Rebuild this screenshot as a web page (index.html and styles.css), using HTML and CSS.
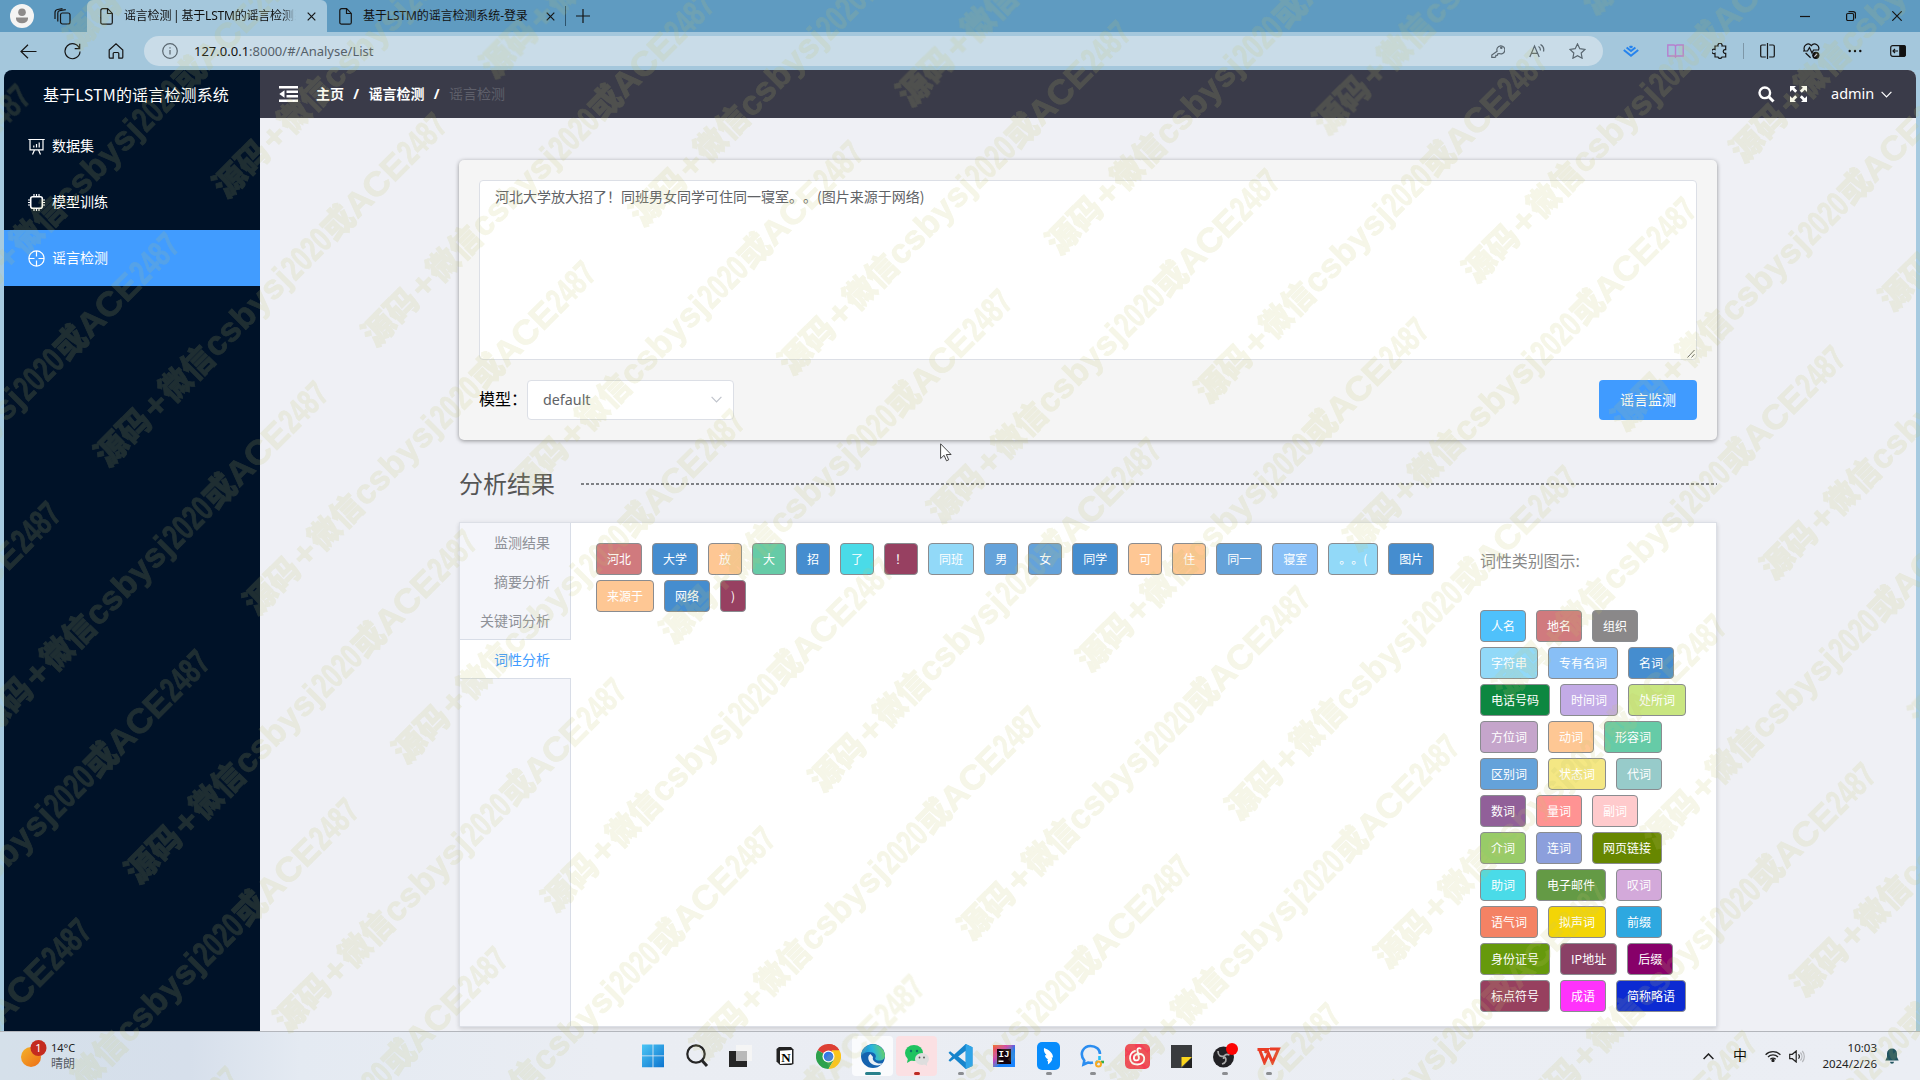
FILE: index.html
```html
<!DOCTYPE html>
<html lang="zh-CN">
<head>
<meta charset="utf-8">
<title>谣言检测 | 基于LSTM的谣言检测系统</title>
<link rel="stylesheet" href="styles.css">
</head>
<body>
<div class="screen">
  <div class="tabbar">
    <span class="avatar"><svg width="24" height="24" viewBox="0 0 24 24"><circle cx="12" cy="12" r="12" fill="#f4f4f3"/><circle cx="12" cy="8.3" r="3.8" fill="#8d8b8a"/><path d="M6 13.5h12v1.2a6 4.6 0 0 1-12 0z" fill="#8d8b8a"/></svg></span>
    <span class="spaces"><svg width="17" height="17" viewBox="0 0 17 17" class="ln"><rect x="6.5" y="5" width="9.5" height="11" rx="2"/><path d="M3.8 13.5V5a2.3 2.3 0 0 1 2-2.3l6-1M1 11V4.500a3 3 0 0 1 2.500-3L8.500.6"/></svg></span>
    <div class="tab active">
      <svg width="13" height="17" viewBox="0 0 13 17" class="ln"><path d="M.8 2.500A1.800 1.800 0 0 1 2.600.7h5l4.700 4.700v9a1.800 1.800 0 0 1-1.800 1.800H2.600a1.800 1.800 0 0 1-1.800-1.800zM7.500.8v4.700h4.700"/></svg>
      <span class="tab-text fade">谣言检测 | 基于LSTM的谣言检测系统</span>
      <svg width="9" height="9" viewBox="0 0 9 9" class="ln"><path d="M.7.7l7.600 7.600M8.300.7L.7 8.300"/></svg>
    </div>
    <div class="tab">
      <svg width="13" height="17" viewBox="0 0 13 17" class="ln"><path d="M.8 2.500A1.800 1.800 0 0 1 2.600.7h5l4.700 4.700v9a1.800 1.800 0 0 1-1.800 1.800H2.600a1.800 1.800 0 0 1-1.800-1.800zM7.500.8v4.700h4.700"/></svg>
      <span class="tab-text">基于LSTM的谣言检测系统-登录</span>
      <svg width="9" height="9" viewBox="0 0 9 9" class="ln"><path d="M.7.7l7.600 7.600M8.300.7L.7 8.300"/></svg>
    </div>
    <span class="tab-sep"></span>
    <svg class="newtab ln" width="14" height="14" viewBox="0 0 14 14"><path d="M7 0v14M0 7h14"/></svg>
    <div class="winbtns">
      <svg width="10" height="10" viewBox="0 0 10 10" class="ln"><path d="M0 5.500h10"/></svg>
      <svg width="10" height="10" viewBox="0 0 10 10" class="ln"><rect x=".6" y="2.500" width="7" height="7" rx="1.200"/><path d="M2.500.6h4.700a2.300 2.300 0 0 1 2.300 2.300v4.700"/></svg>
      <svg width="10" height="10" viewBox="0 0 10 10" class="ln"><path d="M.3.3l9.400 9.400M9.700.3L.3 9.700"/></svg>
    </div>
  </div>

  <div class="toolbar">
    <svg width="17" height="15" viewBox="0 0 17 15" class="ln"><path d="M16.500 7.500H1M8 .8L1 7.500l7 6.700"/></svg>
    <svg width="17" height="17" viewBox="0 0 17 17" class="ln"><path d="M15.500 5.500A7.500 7.500 0 1 0 16 8.500M15.700.8v4.900h-5"/></svg>
    <svg width="16" height="16" viewBox="0 0 16 16" class="ln"><path d="M1.200 7L8 .9 14.800 7v7.200a1 1 0 0 1-1 1h-3V10.500a1 1 0 0 0-1-1H6.200a1 1 0 0 0-1 1v4.700h-3a1 1 0 0 1-1-1z"/></svg>
    <div class="address">
      <svg width="16" height="16" viewBox="0 0 16 16" class="ln gray"><circle cx="8" cy="8" r="7.300"/><path d="M8 7v4.500M8 4.300v1.300"/></svg>
      <span class="url"><b>127.0.0.1</b>:8000/#/Analyse/List</span>
      <div class="addr-icons">
        <svg width="14" height="14" viewBox="0 0 14 14" class="ln gray"><path d="M6.100 7.300a4 4 0 1 1 2 2.200l-1.300.2-.3 1.500-1.600.2-.3 1.600-1 .4H.8V11z"/><circle cx="10.300" cy="3.800" r=".7"/></svg>
        <svg width="16" height="14" viewBox="0 0 16 14" class="ln gray"><path d="M.8 13L5.500 2l4.700 11M2.500 9.300h6M9.500 2.500c1.600 1 2 2.800 1.700 4M11.500.5c3 1.700 3.600 4.700 3 7"/></svg>
        <svg width="17" height="16" viewBox="0 0 17 16" class="ln gray"><path d="M8.500.9l2.300 4.800 5.200.7-3.800 3.600.9 5.200-4.600-2.500-4.600 2.500.9-5.200L1 6.400l5.200-.7z"/></svg>
      </div>
    </div>
    <div class="ext">
      <svg width="16" height="12" viewBox="0 0 16 12" fill="none" stroke="#2583ee" stroke-width="2"><path d="M.8 5L8 10.700 15.200 5M3.600 2.500L8 6l4.400-3.500"/><path d="M6.500 1.200L8 2.300l1.500-1.100"/></svg>
      <svg width="17" height="14" viewBox="0 0 17 14" fill="none" stroke="#b67fce" stroke-width="1.400"><path d="M8.500 2v10M.8 1h6a1.700 1.700 0 0 1 1.700 1.300A1.700 1.700 0 0 1 10.200 1h6v11h-6a1.700 1.700 0 0 0-1.700 1 1.700 1.700 0 0 0-1.700-1h-6z"/></svg>
      <svg width="15" height="16" viewBox="0 0 15 16" class="ln"><path d="M3 3h3a2.100 2.100 0 1 1 4 0h3.700v3.700h-1a1.900 1.900 0 0 0 0 3.700h1V14H10a2.100 2.100 0 0 1-4 0H3v-3.700a2.200 2.200 0 1 1 0-3.800z"/></svg>
      <span class="ext-sep"></span>
      <svg width="15" height="16" viewBox="0 0 15 16" class="ln"><path d="M5.800 2H2A1.300 1.300 0 0 0 .7 3.300v9.400A1.300 1.300 0 0 0 2 14h3.800M9.200 2H13a1.300 1.300 0 0 1 1.300 1.300v9.400A1.300 1.300 0 0 1 13 14H9.200M7.500 0v16"/></svg>
      <svg width="17" height="16" viewBox="0 0 17 16" class="ln"><path d="M1.500 7.500C-.4 2.500 5.200-1.300 8.300 2.700c3.200-4 9.300 0 7 4.800M0 8h4.500L6.500 4.500 9 10l1.500-3h5M2.600 10l5 4.800"/><circle cx="12.800" cy="12.300" r="3.600" fill="#111" stroke="none"/><path d="M11.400 13.700l2.600-2.800" stroke="#ccd"/></svg>
      <svg width="14" height="4" viewBox="0 0 14 4" fill="#111"><circle cx="1.700" cy="2" r="1.200"/><circle cx="7" cy="2" r="1.200"/><circle cx="12.300" cy="2" r="1.200"/></svg>
      <svg width="16" height="12" viewBox="0 0 16 12" class="ln"><rect x=".7" y=".7" width="14.600" height="10.600" rx="2"/><path d="M9.800.7H14a1.300 1.300 0 0 1 1.300 1.300v8a1.300 1.300 0 0 1-1.300 1.300H9.800z" fill="#111"/><path d="M8 6H3M5 4L3 6l2 2"/></svg>
    </div>
  </div>

  <div class="page">
    <aside class="sidebar">
      <div class="logo">基于LSTM的谣言检测系统</div>
      <div class="menu-item"><svg width="17" height="17" viewBox="0 0 17 17" class="ln mi"><path d="M.3 1.500h16.400M2 1.500v10.300h13V1.500M5.800 9.500v-2M8.500 9.500V6M11.200 9.500V4.500M6.500 12l-2 4.500M10.500 12l2 4.500"/></svg>数据集</div>
      <div class="menu-item"><svg width="17" height="17" viewBox="0 0 17 17" class="ln mi"><rect x="2.700" y="2.700" width="11.600" height="11.600" rx="2" stroke-width="1.600"/><path d="M6 0v3M8.500 0v3M11 0v3M6 14v3M8.500 14v3M11 14v3M0 6h3M0 8.500h3M0 11h3M14 6h3M14 8.500h3M14 11h3"/></svg>模型训练</div>
      <div class="menu-item on"><svg width="17" height="17" viewBox="0 0 17 17" class="ln mi"><circle cx="8.500" cy="8.500" r="7.600"/><path d="M8.500 1v5.500M8.500 10.500V16M1 8.500h5.500M10.500 8.500H16"/></svg>谣言检测</div>
    </aside>
    <section class="main">
      <header class="header">
        <svg class="fold" width="19" height="16" viewBox="0 0 19 16" fill="#fff"><path d="M0 0h19v2.400H0zM7.500 4.500H19v2.400H7.500zM7.500 9H19v2.400H7.500zM0 13.500h19V16H0zM5.500 4.200v7.500L.3 8z"/></svg>
        <div class="crumbs"><b>主页</b><i>/</i><b>谣言检测</b><i>/</i><span>谣言检测</span></div>
        <div class="tools">
          <svg width="17" height="17" viewBox="0 0 17 17" fill="none" stroke="#fff"><circle cx="6.800" cy="6.800" r="5.300" stroke-width="2.400"/><path d="M10.800 10.800l4.700 4.700" stroke-width="3"/></svg>
          <svg width="17" height="16" viewBox="0 0 17 16" fill="#fff"><path d="M0 0h6L4.200 1.800l3 3-2 2-3-3L0 6zM17 0v6l-2.200-2.200-3 3-2-2 3-3L11 0zM0 16v-6l2.200 2.200 3-3 2 2-3 3L6 16zM17 16h-6l1.800-1.800-3-3 2-2 3 3L17 10z"/></svg>
          <span class="user">admin</span>
          <svg width="11" height="7" viewBox="0 0 11 7" fill="none" stroke="#fff" stroke-width="1.200"><path d="M.6.8l4.900 5 4.900-5"/></svg>
        </div>
      </header>
      <div class="content">
        <div class="card">
          <div class="textarea">河北大学放大招了！同班男女同学可住同一寝室。。(图片来源于网络)
            <svg class="grip" width="8" height="9" viewBox="0 0 8 9" stroke="#666" stroke-width="1"><path d="M.5 8.500l7-7.500M4.500 8.500l3-3.300"/></svg>
          </div>
          <div class="form-row">
            <label>模型：</label>
            <div class="select">default<svg width="11" height="7" viewBox="0 0 11 7" fill="none" stroke="#c0c4cc" stroke-width="1.200"><path d="M.6.8l4.900 5 4.900-5"/></svg></div>
            <div class="btn">谣言监测</div>
          </div>
        </div>
        <div class="heading"><h2>分析结果</h2><div class="rule"></div></div>
        <div class="panel">
          <nav class="side-tabs"><a>监测结果</a><a>摘要分析</a><a>关键词分析</a><a class="cur">词性分析</a></nav>
          <div class="words">
            <span class="tag place">河北</span><span class="tag noun">大学</span><span class="tag verb">放</span><span class="tag adj">大</span><span class="tag noun">招</span><span class="tag aux">了</span><span class="tag punct">！</span><span class="tag str">同班</span><span class="tag diff">男</span><span class="tag diff">女</span><span class="tag noun">同学</span><span class="tag verb">可</span><span class="tag verb">住</span><span class="tag diff">同一</span><span class="tag proper">寝室</span><span class="tag str">。。(</span><span class="tag noun">图片</span><span class="tag verb">来源于</span><span class="tag noun">网络</span><span class="tag punct">)</span>
          </div>
          <div class="legend">
            <div class="legend-title">词性类别图示:</div>
            <div class="legend-tags">
              <span class="tag person">人名</span><span class="tag place">地名</span><span class="tag org">组织</span>
              <span class="tag str">字符串</span><span class="tag proper">专有名词</span><span class="tag noun">名词</span>
              <span class="tag phone">电话号码</span><span class="tag time">时间词</span><span class="tag loc">处所词</span>
              <span class="tag dir">方位词</span><span class="tag verb">动词</span><span class="tag adj">形容词</span>
              <span class="tag diff">区别词</span><span class="tag state">状态词</span><span class="tag pron">代词</span>
              <span class="tag num">数词</span><span class="tag quant">量词</span><span class="tag adv">副词</span>
              <span class="tag prep">介词</span><span class="tag conj">连词</span><span class="tag link">网页链接</span>
              <span class="tag aux">助词</span><span class="tag mail">电子邮件</span><span class="tag excl">叹词</span>
              <span class="tag mood">语气词</span><span class="tag onom">拟声词</span><span class="tag prefix">前缀</span>
              <span class="tag idno">身份证号</span><span class="tag ip">IP地址</span><span class="tag suffix">后缀</span>
              <span class="tag punct2">标点符号</span><span class="tag idiom">成语</span><span class="tag abbr">简称略语</span>
            </div>
          </div>
        </div>
      </div>
    </section>
  </div>

  <footer class="taskbar">
    <div class="weather">
      <svg width="26" height="28" viewBox="0 0 26 28"><defs><linearGradient id="sun" x1="0" y1="0" x2="1" y2="1"><stop offset="0" stop-color="#f3b32c"/><stop offset="1" stop-color="#ee6d15"/></linearGradient></defs><circle cx="10" cy="17" r="10" fill="url(#sun)"/><circle cx="17.500" cy="8" r="8" fill="#c42b1f"/><text x="17.500" y="12" font-size="11" fill="#fff" text-anchor="middle">1</text></svg>
      <div class="temp"><span>14°C</span><span class="sky">晴朗</span></div>
    </div>
    <div class="apps">
      <div class="app"><svg width="24" height="24" viewBox="0 0 24 24"><defs><linearGradient id="win" x1="0" y1="0" x2="1" y2="1"><stop offset="0" stop-color="#4cc6f5"/><stop offset="1" stop-color="#0d74cf"/></linearGradient></defs><path d="M1 .5h10.600v11H1zM12.400.5H23v11H12.400zM1 12.300h10.600v11H1zM12.400 12.300H23v11H12.400z" fill="url(#win)"/></svg></div>
      <div class="app"><svg width="24" height="24" viewBox="0 0 24 24" fill="none" stroke="#252525"><circle cx="11" cy="10" r="8.700" stroke-width="2.200"/><path d="M17 16.500l5 5.500" stroke-width="3"/></svg></div>
      <div class="app"><svg width="24" height="24" viewBox="0 0 24 24"><path d="M0 7h18v16H0z" fill="#252525"/><path d="M7 1h16v16H7z" fill="#f5f5f5"/><path d="M7 7h11v10H7z" fill="#b9b9b9"/></svg></div>
      <div class="app"><svg width="20" height="20" viewBox="0 0 20 20"><path d="M1.500 3L4 1h12l2.500 2.500V18L16 19H5L1.500 15.500z" fill="#222"/><path d="M5 4.800L17 4v13.200L5 18z" fill="#fff"/><text x="11" y="15.500" font-family="Liberation Serif, serif" font-size="13" font-weight="bold" text-anchor="middle">N</text></svg></div>
      <div class="app"><svg width="25" height="25" viewBox="0 0 24 24"><path d="M12 12L1.600 6A12 12 0 0 1 22.400 6z" fill="#dd4035"/><path d="M12 12V0A12 12 0 0 1 22.400 6L12 6z" fill="#dd4035"/><path d="M1.600 6A12 12 0 0 0 12 24l5.200-9L12 12z" fill="#2da14c"/><path d="M22.400 6A12 12 0 0 1 12 24l5.200-9L15 6z" fill="#fbc51c"/><circle cx="12" cy="12" r="5.800" fill="#fff"/><circle cx="12" cy="12" r="4.600" fill="#3278e8"/></svg></div>
      <div class="app focus"><svg width="24" height="24" viewBox="0 0 24 24"><defs><linearGradient id="edge" x1="0" y1=".5" x2="1" y2=".3"><stop offset="0" stop-color="#1a85d5"/><stop offset=".5" stop-color="#29b6dc"/><stop offset="1" stop-color="#6bd35d"/></linearGradient></defs><circle cx="12" cy="12" r="12" fill="#1462af"/><path d="M.1 11A12 12 0 0 1 24 11.500c0 4-3.700 5.500-7 5-3-.4-3.200-2-2.300-3.200C15.700 11 13 8 8.500 8 4 8 1 10 .1 12z" fill="url(#edge)"/><path d="M9.500 10c-4 2-2.500 9 3.500 11 4 1.200 7.500 0 9.500-2-6 2-12-2-10.500-6z" fill="#e8eff6"/></svg></div>
      <div class="app alert"><svg width="24" height="24" viewBox="0 0 24 24"><ellipse cx="9" cy="9" rx="9" ry="8" fill="#20c360"/><path d="M3 14l-1 5 5-3z" fill="#20c360"/><circle cx="6" cy="7" r="1.200" fill="#176"/><circle cx="12" cy="7" r="1.200" fill="#176"/><ellipse cx="17" cy="15" rx="7" ry="6" fill="#dedede"/><path d="M19 20l3 2v-4z" fill="#dedede"/><circle cx="14.500" cy="13.500" r=".9" fill="#555"/><circle cx="19" cy="13.500" r=".9" fill="#555"/></svg></div>
      <div class="app run"><svg width="25" height="25" viewBox="0 0 24 24"><path d="M17 0l6.500 3v18L17 24 6 14 2 17l-1.500-1.500L4 12 .5 8.500 2 7l4 3z" fill="#1684cc"/><path d="M17 6.500V17.500L9.800 12z" fill="#ebeef4"/><path d="M17 0l6.500 3v18L17 24z" fill="#30a5e8"/></svg></div>
      <div class="app"><svg width="23" height="24" viewBox="0 0 23 24"><defs><linearGradient id="ij" x1="0" y1="0" x2="1" y2="1"><stop offset="0" stop-color="#f6662a"/><stop offset=".35" stop-color="#cf3fb5"/><stop offset=".6" stop-color="#147cf5"/><stop offset="1" stop-color="#1d87ff"/></linearGradient></defs><path d="M0 1h22v22H0z" fill="url(#ij)"/><path d="M4 5h14v15H4z" fill="#15020e"/><text x="5.500" y="12.500" font-family="Liberation Mono, monospace" font-size="9" font-weight="bold" fill="#fff">IJ</text><path d="M5.500 16.500h5V18h-5z" fill="#fff"/></svg></div>
      <div class="app run"><svg width="23" height="28" viewBox="0 0 23 28"><rect width="23" height="28" rx="5" fill="#078cfc"/><path d="M7 6c5 1.500 9 5 9 9.500h-1.500l.8 1.500c-1 3-2.300 4-4.500 5.500.6-3 .1-3.500-1-4.500l1.500-.5C8.300 16 7.800 14 8.300 13l1.300.3C7.500 11 6.500 9 7 6z" fill="#fff"/></svg></div>
      <div class="app run"><svg width="25" height="24" viewBox="0 0 25 24" fill="none" stroke-width="2.600"><path d="M13 18.500c-2 .6-3.500.4-5 0L3.500 20.500l.8-4C-1.500 9 4 2 10.500 2 16 2 20 5.500 20 10" stroke="#2b8df0"/><path d="M19.500 12v4M18 19l-2-2" stroke="#25bdf2"/><path d="M21 18h3" stroke="#34b04a"/><circle cx="18.500" cy="20" r="2.500" stroke="#f8a920" stroke-width="2"/></svg></div>
      <div class="app"><svg width="25" height="25" viewBox="0 0 25 25"><rect width="25" height="25" rx="5" fill="#f53e54"/><path d="M15.500 4.500c-2-1-3.500.3-3 2.500l1.400 6.500c.5 3.500-4.600 3.800-5 .8-.3-3 2.300-4.600 5.500-4.600 6.500.3 7 10.300-1.900 10.800C3 20.500 3 9 10 7" fill="none" stroke="#fff" stroke-width="1.900" stroke-linecap="round"/></svg></div>
      <div class="app"><svg width="23" height="23" viewBox="0 0 23 23"><path d="M1 0h21v12.500L11.500 23H1z" fill="#393b3e"/><path d="M11.500 23L22 12v11z" fill="#222"/><path d="M11.500 12H22L11.500 22z" fill="#fbd51c"/></svg></div>
      <div class="app run"><svg width="26" height="26" viewBox="0 0 26 26"><circle cx="11.500" cy="14" r="10.500" fill="#222125"/><path d="M6 8c0 5 3 6 6 5M17.500 12c-4-2-6 1-6 4M10 21c4-1 5-4 3-7" fill="none" stroke="#aaa" stroke-width="1.700"/><circle cx="20" cy="6" r="6" fill="#fd0504"/></svg></div>
      <div class="app run"><svg width="24" height="18" viewBox="0 0 24 18" fill="none" stroke="#ea3d26" stroke-width="3"><path d="M.5 2.500h10L8 6M2.500 2.500l5 13 4-9 4 9L21.500 2H13"/></svg></div>
    </div>
    <div class="tray">
      <svg width="11" height="7" viewBox="0 0 11 7" fill="none" stroke="#222" stroke-width="1.500"><path d="M.6 6l4.900-5 4.900 5"/></svg>
      <span class="ime">中</span>
      <svg width="16" height="12" viewBox="0 0 16 12" fill="none" stroke="#222" stroke-width="1.300"><path d="M.6 4.700a10.500 10.500 0 0 1 14.800 0M3 7a7 7 0 0 1 10 0M5.300 9.300a4 4 0 0 1 5.400 0"/><circle cx="8" cy="10.500" r="1" fill="#222"/></svg>
      <svg width="16" height="13" viewBox="0 0 16 13" fill="none" stroke="#222" stroke-width="1.200"><path d="M.7 4.300h2.600L7.200 1v11L3.300 8.700H.7zM9.500 4.300a3.500 3.500 0 0 1 0 4.400"/><path d="M11.400 2.500a6 6 0 0 1 0 8M13.300 1a8.500 8.500 0 0 1 0 11" stroke="#b5b7bb"/></svg>
      <div class="clock"><span>10:03</span><span>2024/2/26</span></div>
      <svg class="bell" width="14" height="16" viewBox="0 0 14 16" fill="#21545f"><path d="M7 .5a5 5 0 0 1 5 5V9l1.700 3.500H.3L2 9V5.500a5 5 0 0 1 5-5zM5 13.700h4a2 2 0 0 1-4 0z"/></svg>
    </div>
  </footer>

  <svg class="cursor" width="12" height="19" viewBox="0 0 12 19"><path d="M.6.8v14.700l3.500-3.200 2.400 5.500 2.200-1-2.400-5.300h4.800z" fill="#fff" stroke="#333" stroke-width=".9"/></svg>
  <svg class="watermark" id="watermark" width="1920" height="1080" viewBox="0 0 1920 1080">
    <defs>
      <g id="mark">
        <text x="-7" y="12" textLength="64" lengthAdjust="spacingAndGlyphs">源码</text>
        <text class="wide" x="60" y="12" textLength="22" lengthAdjust="spacingAndGlyphs">+</text>
        <text x="84" y="12" textLength="62" lengthAdjust="spacingAndGlyphs">微信</text>
        <text class="wide" x="147" y="11" textLength="109" lengthAdjust="spacing">csbysj</text>
        <text class="narrow" x="257" y="12" textLength="55" lengthAdjust="spacingAndGlyphs">2020</text>
        <text x="313" y="12" textLength="32" lengthAdjust="spacingAndGlyphs">或</text>
        <text class="wide" x="345" y="12" textLength="75" lengthAdjust="spacingAndGlyphs">ACE</text>
        <text class="narrow" x="421" y="12" textLength="54" lengthAdjust="spacingAndGlyphs">2487</text>
      </g>
    </defs>
  </svg>
</div>
<script src="watermark.js"></script>
</body>
</html>
```
FILE: styles.css
```css
* { box-sizing: border-box; }
body { margin: 0; font-family: "Noto Sans", "Noto Sans CJK SC", sans-serif; font-size: 14px; text-spacing-trim: space-all; }
svg { display: block; flex: none; }
.ln { fill: none; stroke: #151515; stroke-width: 1.200; }
.gray { stroke: #59666f; }
.mi { stroke: #fff; }
.screen { position: relative; width: 1920px; height: 1080px; overflow: hidden; display: flex; flex-direction: column; background: #a6cae0; }

.tabbar { height: 32px; flex: none; display: flex; align-items: center; background: #5f9bc1; }
.avatar { margin-left: 10px; }
.spaces { margin-left: 20px; width: 33px; }
.tab { height: 32px; width: 238px; padding: 0 10px 0 12px; display: flex; align-items: center; gap: 11px; font-size: 12px; white-space: nowrap; color: #111; }
.tab.active { width: 240px; background: #a4c7dc; border-radius: 6px 6px 0 0; padding: 0 11px 0 13px; }
.tab-text { flex: 1; overflow: hidden; letter-spacing: -.1px; line-height: 20px; }
.fade { letter-spacing: -.2px; word-spacing: -1px; -webkit-mask-image: linear-gradient(90deg, #000 92%, transparent 100%); mask-image: linear-gradient(90deg, #000 92%, transparent 100%); }
.tab-sep { width: 1px; height: 20px; background: #2d536c; }
.newtab { margin-left: 10px; }
.winbtns { margin-left: auto; display: flex; gap: 36px; padding-right: 18px; }

.toolbar { height: 38px; flex: none; display: flex; align-items: center; background: #a4c7dc; padding: 0 14px 0 20px; }
.toolbar > svg { margin-right: 27px; }
.toolbar > svg + svg + svg { margin-right: 20px; }
.address { width: 1459px; height: 30px; border-radius: 15px; background: #c9dce8; display: flex; align-items: center; padding: 0 17px 0 18px; }
.url { margin-left: 16px; font-size: 13px; color: #55616a; }
.url b { font-weight: 400; color: #111; }
.addr-icons { margin-left: auto; display: flex; gap: 24px; align-items: center; }
.ext { display: flex; flex: 1; justify-content: space-between; align-items: center; padding-left: 20px; }
.ext-sep { width: 1px; height: 16px; background: #7d97a8; margin: 0 -12px; }

.page { flex: none; height: 961px; margin: 0 4px; display: flex; border-radius: 8px 8px 0 0; overflow: hidden; }
.sidebar { width: 256px; background: #001228; color: #fff; }
.logo { height: 48px; line-height: 49px; padding-left: 39px; font-size: 16px; white-space: nowrap; font-family: "Noto Sans CJK SC", sans-serif; letter-spacing: .15px; }
.menu-item { height: 56px; display: flex; align-items: center; gap: 7px; padding: 0 0 3px 24px; }
.menu-item svg { margin-top: 4px; }
.on { background: #419cff; }
.main { flex: 1; background: #eff0f5; }
.header { height: 48px; background: #3a3b49; color: #fff; display: flex; align-items: center; padding: 0 24px 0 19px; }
.crumbs { display: flex; margin-left: 18px; line-height: 20px; }
.crumbs i { font-style: normal; font-weight: 700; width: 24.500px; text-align: center; }
.crumbs span { color: #5f606b; }
.tools { margin-left: auto; display: flex; align-items: center; }
.tools svg + svg { margin-left: 15px; }
.user { margin-left: 24px; font-size: 14.500px; line-height: 20px; margin-top: -2px; width: 50px; }

.content { padding: 42px 199px 0; }
.card { height: 280px; background: #f5f5f5; border-radius: 5px; padding: 20px 20px 0; box-shadow: 0 1px 4px rgba(0,0,0,.4); }
.textarea { position: relative; height: 180px; background: #fff; border: 1px solid #dcdfe6; border-radius: 4px; padding: 4px 15px; line-height: 22px; color: #606266; font-family: "Noto Sans CJK SC", sans-serif; }
.grip { position: absolute; right: 1px; bottom: 1px; }
.form-row { display: flex; align-items: center; margin-top: 20px; height: 40px; }
.form-row label { font-size: 16px; width: 48px; line-height: 24px; margin-top: -2px; white-space: nowrap; color: #000; }
.select { width: 207px; height: 40px; background: #fff; border: 1px solid #dcdfe6; border-radius: 4px; display: flex; align-items: center; justify-content: space-between; padding: 0 11px 1px 15px; font-size: 14.300px; color: #606266; }
.btn { margin-left: auto; width: 98px; height: 40px; line-height: 39px; text-align: center; border-radius: 4px; background: #409bff; color: #fff; }
.heading { display: flex; align-items: center; height: 36px; margin: 26px 0 20px; }
.heading h2 { margin: 0; font-size: 24px; font-weight: 400; color: #555; width: 122px; line-height: 36px; }
.rule { flex: 1; height: 2px; background: repeating-linear-gradient(90deg, #7f8185 0 3px, transparent 3px 5px); }
.panel { height: 505px; display: flex; background: #fff; border: 1px solid #dcdfe6; box-shadow: 0 2px 4px rgba(0,0,0,.12), 0 0 6px rgba(0,0,0,.04); }
.side-tabs { width: 111px; background: #f4f5fa; border-right: 1px solid #d8dde7; }
.side-tabs a { display: block; height: 39px; line-height: 39px; padding-right: 20px; text-align: right; color: #8e9198; }
.side-tabs .cur { height: 40px; width: 111px; margin-top: -1px; padding-right: 21px; background: #fff; color: #409bff; border-top: 1px solid #d8dde7; border-bottom: 1px solid #d8dde7; }
.words { width: 845px; margin: 20px 39px 0 25px; display: flex; flex-wrap: wrap; align-content: flex-start; gap: 5px 10px; }
.legend { width: 212px; padding-top: 25px; }
.legend-title { height: 62px; line-height: 26px; font-size: 16px; color: #888; white-space: nowrap; letter-spacing: -.1px; }
.legend-tags { display: flex; flex-wrap: wrap; gap: 5px 10px; }
.tag { height: 32px; line-height: 30px; border: 1px solid #8a8c90; border-radius: 4px; padding: 0 10px; font-size: 12px; color: #fff; white-space: nowrap; font-family: "Noto Sans CJK SC", sans-serif; }
.person { background: #4fc1fb; } .place { background: #d07a7e; } .org { background: #8a8889; }
.str { background: #92d9f8; } .proper { background: #88bff6; } .noun { background: #458dcf; }
.phone { background: #0d8740; } .time { background: #c3abe6; } .loc { background: #c9e681; }
.dir { background: #c5a5cb; } .verb { background: #fec794; } .adj { background: #66cba7; }
.diff { background: #64a2da; } .state { background: #f4e784; } .pron { background: #97cbca; }
.num { background: #916099; } .quant { background: #ff9393; } .adv { background: #ffcacc; }
.prep { background: #98cb68; } .conj { background: #8c9fdc; } .link { background: #678700; }
.aux { background: #4adbe8; } .mail { background: #649a45; } .excl { background: #d3a9da; }
.mood { background: #f48264; } .onom { background: #f3d506; } .prefix { background: #2da8e0; }
.idno { background: #66990c; } .ip { background: #8a4166; } .suffix { background: #870069; }
.punct { background: #974061; } .punct2 { background: #97405f; } .idiom { background: #ff32fb; } .abbr { background: #0c2ad2; }

.taskbar { flex: 1; position: relative; display: flex; align-items: center; border-top: 1px solid #b3b6bc; background: linear-gradient(90deg, #d5e0ea 0, #d6dfeb 190px, #e4eaf2 300px, #eaedf3 600px, #ebeef4 100%); }
.weather { width: 632px; display: flex; gap: 4px; padding-left: 21px; align-items: center; }
.weather > svg { margin-top: -5px; }
.temp { display: flex; flex-direction: column; font-size: 11px; line-height: 16px; color: #222; }
.sky { color: #555b63; font-size: 12px; }
.apps { display: flex; gap: 3px; }
.app { position: relative; width: 41.060px; height: 40px; display: flex; align-items: center; justify-content: center; border-radius: 4px; }
.focus { background: #fafbfd; }
.alert { background: #fbe0e3; }
.run::after, .focus::after, .alert::after { content: ""; position: absolute; bottom: 1px; left: 50%; width: 6px; height: 3px; margin-left: -3px; border-radius: 2px; background: #8b8d91; }
.focus::after { width: 16px; margin-left: -8px; background: #29808c; }
.alert::after { background: #bd2b24; }
.tray { margin-left: auto; display: flex; align-items: center; padding-right: 21px; }
.ime { font-size: 14px; line-height: 20px; margin: -2px 18px 0 19px; }
.tray svg + svg { margin-left: 8px; }
.clock { width: 72px; display: flex; flex-direction: column; text-align: right; font-size: 11.500px; line-height: 16px; color: #222; }
.tray .bell { margin-left: 8px; }

.cursor { position: absolute; left: 940px; top: 443px; }
.watermark { position: absolute; left: 0; top: 0; pointer-events: none; fill: #c2c56d; opacity: .16; font-family: "Noto Sans CJK SC", sans-serif; font-weight: 900; font-size: 33px; stroke: #c2c56d; stroke-width: .8px; }
.wide { font-family: "Liberation Sans", sans-serif; font-weight: 700; font-size: 34px; }
.narrow { font-family: "Liberation Sans", sans-serif; font-weight: 700; font-size: 35px; }
```
FILE: watermark.js
```js
// Repeats the diagonal mark over the whole screen on a staggered lattice.
(function () {
  var svg = document.getElementById('watermark');
  var ns = 'http://www.w3.org/2000/svg';
  for (var i = -16; i <= 16; i++) {
    for (var j = -8; j <= 8; j++) {
      var x = 789 + i * 149 + j * 416.5;
      var y = 363 + i * 148.4 + j * 28.2;
      if (x < -380 || x > 1950 || y < -30 || y > 1460) continue;
      var use = document.createElementNS(ns, 'use');
      use.setAttribute('href', '#mark');
      use.setAttribute('transform', 'translate(' + x + ' ' + y + ') rotate(-45)');
      svg.appendChild(use);
    }
  }
})();
```
